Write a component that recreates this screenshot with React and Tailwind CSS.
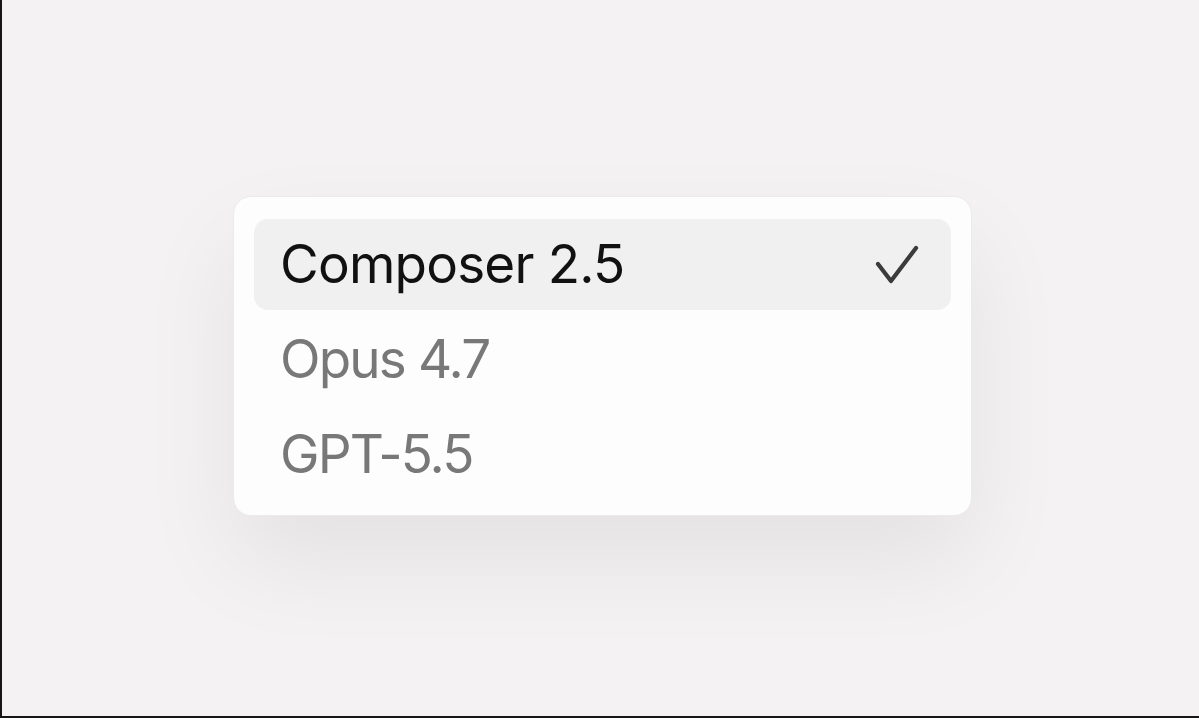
import React from "react";

const font = { fontFamily: "Inter, 'Noto Sans', sans-serif" };

export default function App() {
  return (
    <div className="w-[1199px] h-[718px] bg-[#f4f2f2] border-l-2 border-b-2 border-[#161616] overflow-hidden flex items-start pl-[231px] pt-[196px]" style={font}>
      <div className="w-[739px] h-[320px] bg-[#fdfdfd] rounded-[18px] border border-[#ebebeb] shadow-[0_45px_100px_rgba(0,0,0,0.07)] pt-[22px] pb-[15px] px-[20px] flex flex-col gap-1">
        <div className="h-[91px] rounded-[14px] bg-[#f0f0f0] flex items-center justify-between pl-[26px] pr-[31px]">
          <span className="text-[53px] leading-none text-[#111111] tracking-[-0.015em]">Composer 2.5</span>
          <svg width="46" height="42" viewBox="0 0 46 42" fill="none">
            <path d="M4 20 L17 37 L42 4" stroke="#3b3b3b" strokeWidth="4.2" strokeLinecap="round" strokeLinejoin="round" />
          </svg>
        </div>
        <div className="h-[91px] flex items-center pl-[26px]">
          <span className="text-[53px] leading-none text-[#787878] tracking-[-0.035em]">Opus 4.7</span>
        </div>
        <div className="h-[91px] flex items-center pl-[26px]">
          <span className="text-[53px] leading-none text-[#787878] tracking-[-0.035em]">GPT-5.5</span>
        </div>
      </div>
    </div>
  );
}
